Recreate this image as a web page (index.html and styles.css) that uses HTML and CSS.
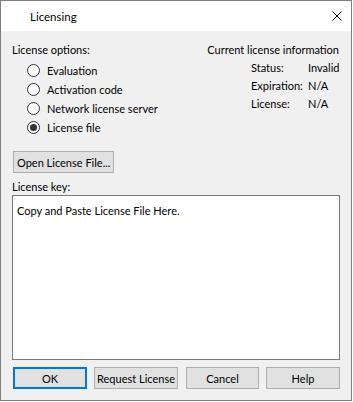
FILE: index.html
```html
<!DOCTYPE html>
<html lang="en">
<head>
    <meta charset="UTF-8">
    <title>Licensing</title>
    <link rel="stylesheet" href="styles.css">
</head>
<body>
    <div class="window">
        <div class="titlebar">
            <span class="title">Licensing</span>
            <svg class="close" width="10" height="10" viewBox="0 0 10 10">
                <path d="M0.5 0.5 L9.5 9.5 M9.5 0.5 L0.5 9.5" stroke="#000" stroke-width="1" fill="none"/>
            </svg>
        </div>
        <div class="content">
            <div class="top">
                <div class="options">
                    <div class="heading">License options:</div>
                    <label class="radio"><span class="dot"></span>Evaluation</label>
                    <label class="radio"><span class="dot"></span>Activation code</label>
                    <label class="radio"><span class="dot"></span>Network license server</label>
                    <label class="radio"><span class="dot checked"></span>License file</label>
                </div>
                <div class="info">
                    <div class="heading">Current license information</div>
                    <div class="info-grid">
                        <span>Status:</span><span>Invalid</span>
                        <span>Expiration:</span><span>N/A</span>
                        <span>License:</span><span>N/A</span>
                    </div>
                </div>
            </div>
            <button class="btn open-btn">Open License File...</button>
            <div class="key-label">License key:</div>
            <div class="keybox">Copy and Paste License File Here.</div>
            <div class="actions">
                <button class="btn default">OK</button>
                <button class="btn">Request License</button>
                <button class="btn cancel">Cancel</button>
                <button class="btn">Help</button>
            </div>
        </div>
    </div>
</body>
</html>
```

FILE: styles.css
```css
body {
    margin: 0;
    background: #ffffff;
    font-family: Lato, "Liberation Sans", sans-serif;
    font-size: 11px;
    color: #000;
}
.window {
    width: 352px;
    height: 401px;
    box-sizing: border-box;
    border: 1px solid #7f7f7f;
    display: flex;
    flex-direction: column;
}
.titlebar {
    height: 30px;
    background: #ffffff;
    display: flex;
    align-items: center;
    justify-content: space-between;
    padding: 0 9px 0 29px;
}
.title {
    font-size: 11.5px;
}
.content {
    flex: 1;
    background: #f0f0f0;
    padding: 11px 11px 0 11px;
    display: flex;
    flex-direction: column;
}
.top {
    display: flex;
    justify-content: space-between;
}
.heading {
    line-height: 16px;
    white-space: nowrap;
}
.options .heading {
    margin-bottom: 3px;
}
.radio {
    display: flex;
    align-items: center;
    height: 19px;
    padding-left: 15px;
    white-space: nowrap;
}
.dot {
    width: 11px;
    height: 11px;
    border: 1px solid #333;
    border-radius: 50%;
    background: #fff;
    margin-right: 7px;
    display: flex;
    align-items: center;
    justify-content: center;
}
.dot.checked::after {
    content: "";
    width: 7px;
    height: 7px;
    border-radius: 50%;
    background: #333;
}
.info {
    display: flex;
    flex-direction: column;
    align-items: flex-end;
    padding-right: 1px;
}
.info-grid {
    display: grid;
    grid-template-columns: 57px 31px;
    row-gap: 2px;
    margin-top: 2px;
    line-height: 16px;
    white-space: nowrap;
}
.btn {
    font-family: inherit;
    font-size: 11px;
    background: #e1e1e1;
    border: 1px solid #adadad;
    color: #000;
    padding: 0;
    height: 22px;
    box-sizing: border-box;
    white-space: nowrap;
}
.open-btn {
    align-self: flex-start;
    width: 101px;
    margin-top: 14px;
    margin-left: 1px;
    text-align: left;
    padding-left: 3px;
}
.key-label {
    margin-top: 6px;
    line-height: 16px;
}
.keybox {
    height: 165px;
    box-sizing: border-box;
    border: 1px solid #7a7a7a;
    background: #fff;
    padding: 7px 4px;
    line-height: 16px;
}
.actions {
    display: grid;
    grid-template-columns: 74px 84px 74px 74px;
    column-gap: 7px;
    margin-top: 7px;
    padding-left: 1px;
}
.actions .cancel {
    margin-left: 1px;
}
.btn.default {
    border: 2px solid #0078d7;
}
```
